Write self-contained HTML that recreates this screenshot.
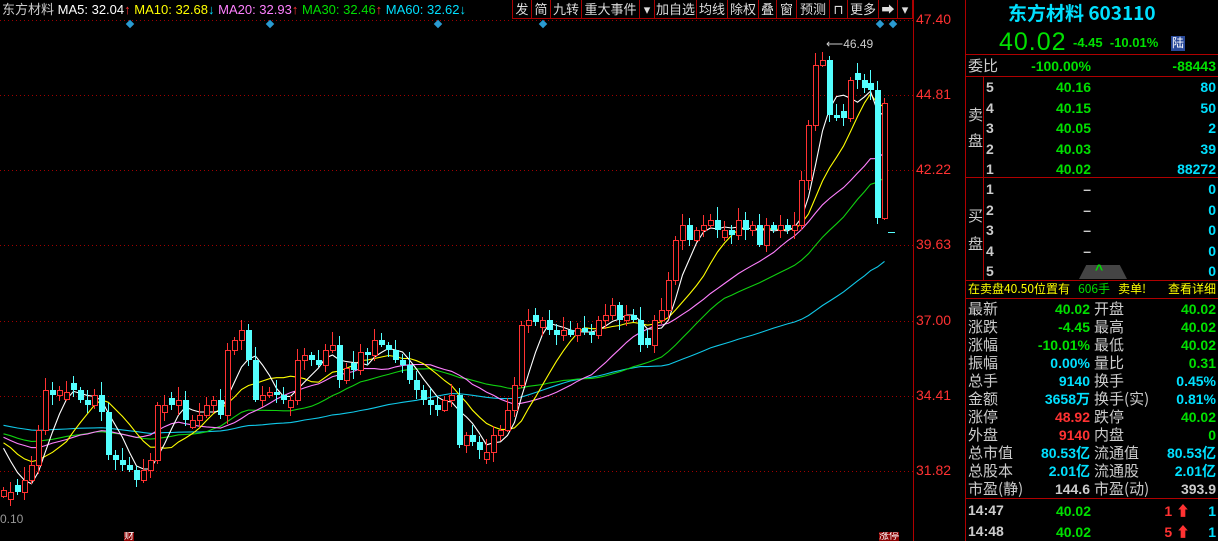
<!DOCTYPE html>
<html><head><meta charset="utf-8">
<style>
*{margin:0;padding:0;box-sizing:border-box}
body{width:1218px;height:541px;background:#000;overflow:hidden;position:relative;font-family:"Liberation Sans","Noto Sans CJK SC",sans-serif;}
.a{position:absolute;white-space:nowrap}
.tb{position:absolute;top:0;height:19px;border:1px solid #a00;border-top:none;color:#ddd;font-size:13px;line-height:18px;text-align:center;font-family:"Noto Sans CJK SC",sans-serif;background:#000}
.r{color:#ff3232}.g{color:#00e000}.c{color:#00e0ff}.w{color:#ccc}.y{color:#ffff00}
.lbl{position:absolute;left:968px;font-size:15px;color:#ccc;font-family:"Noto Sans CJK SC",sans-serif;line-height:18px}
.v{position:absolute;text-align:right;font-size:14px;font-weight:bold;line-height:18px}
.hl{position:absolute;left:965px;width:253px;height:1px;background:#b00000}
</style></head><body>
<svg id="ch" width="913" height="541" style="position:absolute;left:0;top:0">
</svg>
<div class="a" style="left:913px;top:0;width:1px;height:541px;background:#b00000"></div>
<div class="a" style="left:965px;top:0;width:1px;height:541px;background:#b00000"></div>
<div class="a" style="left:2px;top:1px;font-size:13px;line-height:16px">
<span class="w" style="font-family:'Noto Sans CJK SC',sans-serif">东方材料</span>
<span style="color:#fff">MA5: 32.04</span><span class="r">↑</span>
<span class="y">MA10: 32.68</span><span class="c">↓</span>
<span style="color:#ff80ff">MA20: 32.93</span><span class="r">↑</span>
<span class="g">MA30: 32.46</span><span class="r">↑</span>
<span class="c">MA60: 32.62</span><span class="c">↓</span>
</div>
<div class="tb" style="left:512px;width:20px">发</div>
<div class="tb" style="left:531px;width:20px">简</div>
<div class="tb" style="left:550px;width:32px">九转</div>
<div class="tb" style="left:581px;width:59px">重大事件</div>
<div class="tb" style="left:639px;width:16px">▾</div>
<div class="tb" style="left:654px;width:43px">加自选</div>
<div class="tb" style="left:696px;width:32px">均线</div>
<div class="tb" style="left:727px;width:32px">除权</div>
<div class="tb" style="left:758px;width:19px">叠</div>
<div class="tb" style="left:776px;width:21px">窗</div>
<div class="tb" style="left:796px;width:34px">预测</div>
<div class="tb" style="left:829px;width:19px">⊓</div>
<div class="tb" style="left:847px;width:32px">更多</div>
<div class="tb" style="left:878px;width:20px">➡</div>
<div class="tb" style="left:897px;width:16px">▾</div>
<div class="a r" style="left:916px;top:11px;font-size:14px">47.40</div>
<div class="a r" style="left:916px;top:86px;font-size:14px">44.81</div>
<div class="a r" style="left:916px;top:161px;font-size:14px">42.22</div>
<div class="a r" style="left:916px;top:236px;font-size:14px">39.63</div>
<div class="a r" style="left:916px;top:312px;font-size:14px">37.00</div>
<div class="a r" style="left:916px;top:387px;font-size:14px">34.41</div>
<div class="a r" style="left:916px;top:462px;font-size:14px">31.82</div>
<div class="a" style="left:0;top:512px;font-size:12px;color:#999">0.10</div>
<div class="a" style="left:124px;top:532px;font-size:10px;color:#fff;background:#800;line-height:10px;height:9px;overflow:hidden">财</div>
<div class="a" style="left:879px;top:532px;font-size:10px;color:#fff;background:#800;line-height:10px;height:9px;overflow:hidden">涨停</div>
<div class="a" style="left:826px;top:37px;font-size:12px;color:#ccc">⟵46.49</div>
<div class="a c" style="left:1008px;top:1px;font-size:19px;font-weight:bold;font-family:'Noto Sans CJK SC',sans-serif;line-height:24px">东方材料 603110</div>
<div class="a g" style="left:999px;top:28px;font-size:25px;line-height:28px;letter-spacing:1px">40.02</div>
<div class="a g" style="left:1073px;top:35px;font-size:13px;font-weight:bold">-4.45&nbsp;&nbsp;-10.01%</div>
<div class="a" style="left:1171px;top:36px;width:14px;height:15px;background:#2a4a9a;color:#fff;font-size:12px;text-align:center;line-height:15px">陆</div>
<div class="hl" style="top:54px"></div>
<div class="hl" style="top:76px"></div>
<div class="hl" style="top:177px"></div>
<div class="hl" style="top:280px"></div>
<div class="hl" style="top:298px"></div>
<div class="hl" style="top:498px"></div>
<div class="a" style="left:983px;top:76px;width:1px;height:204px;background:#b00000"></div>
<div class="lbl" style="top:57px">委比</div>
<div class="v g" style="left:1000px;width:91px;top:57px">-100.00%</div>
<div class="v g" style="left:1120px;width:96px;top:57px">-88443</div>
<div class="lbl" style="top:102px;width:14px;white-space:normal;line-height:26px">卖盘</div>
<div class="lbl" style="top:202px;width:14px;white-space:normal;line-height:28px">买盘</div>
<div id="ob"></div>
<div class="a" style="left:1079px;top:265px;width:48px;height:14px;background:#444;clip-path:polygon(15% 0,85% 0,100% 100%,0 100%)"></div>
<div class="a g" style="left:1095px;top:261px;font-size:14px;font-weight:bold">^</div>
<div class="a" style="left:968px;top:281px;font-size:12px;line-height:16px;font-family:'Noto Sans CJK SC',sans-serif"><span class="y">在卖盘40.50位置有</span>&nbsp;&nbsp;&nbsp;<span class="g">606手</span>&nbsp;&nbsp;&nbsp;<span class="y">卖单!</span></div>
<div class="a y" style="left:1168px;top:281px;font-size:12px;line-height:16px;font-family:'Noto Sans CJK SC',sans-serif">查看详细</div>
<div id="st"></div>
<div class="a w" style="left:968px;top:502px;font-size:14px;font-weight:bold">14:47</div>
<div class="v g" style="left:1000px;width:91px;top:502px">40.02</div>
<div class="v r" style="left:1100px;width:90px;top:502px">1 ⬆</div>
<div class="v c" style="left:1150px;width:66px;top:502px">1</div>
<div class="a w" style="left:968px;top:523px;font-size:14px;font-weight:bold">14:48</div>
<div class="v g" style="left:1000px;width:91px;top:523px">40.02</div>
<div class="v r" style="left:1100px;width:90px;top:523px">5 ⬆</div>
<div class="v c" style="left:1150px;width:66px;top:523px">1</div>
<script>
(function(){
var ob='';
var sell=[['5','40.16','80'],['4','40.15','50'],['3','40.05','2'],['2','40.03','39'],['1','40.02','88272']];
sell.forEach(function(r,i){var t=78+i*20.5;
ob+='<div class="v w" style="left:986px;width:10px;top:'+t+'px;text-align:left">'+r[0]+'</div><div class="v g" style="left:1000px;width:91px;top:'+t+'px">'+r[1]+'</div><div class="v c" style="left:1120px;width:96px;top:'+t+'px">'+r[2]+'</div>';});
for(var i=0;i<5;i++){var t=180+i*20.5;
ob+='<div class="v w" style="left:986px;width:10px;top:'+t+'px;text-align:left">'+(i+1)+'</div><div class="v w" style="left:1000px;width:91px;top:'+t+'px">–</div><div class="v c" style="left:1120px;width:96px;top:'+t+'px">0</div>';}
document.getElementById('ob').innerHTML=ob;
var st=[['最新','40.02','g','开盘','40.02','g'],['涨跌','-4.45','g','最高','40.02','g'],['涨幅','-10.01%','g','最低','40.02','g'],['振幅','0.00%','c','量比','0.31','g'],['总手','9140','c','换手','0.45%','c'],['金额','3658万','c','换手(实)','0.81%','c'],['涨停','48.92','r','跌停','40.02','g'],['外盘','9140','r','内盘','0','g'],['总市值','80.53亿','c','流通值','80.53亿','c'],['总股本','2.01亿','c','流通股','2.01亿','c'],['市盈(静)','144.6','w','市盈(动)','393.9','w']];
var h='';st.forEach(function(r,i){var t=300+i*18;
h+='<div class="lbl" style="top:'+t+'px">'+r[0]+'</div><div class="v '+r[2]+'" style="left:1000px;width:90px;top:'+t+'px">'+r[1]+'</div><div class="lbl" style="left:1094px;top:'+t+'px">'+r[3]+'</div><div class="v '+r[5]+'" style="left:1120px;width:96px;top:'+t+'px">'+r[4]+'</div>';});
document.getElementById('st').innerHTML=h;

var s='';
[20,95,170,245,321,396,471].forEach(function(y){s+='<line x1="0" y1="'+(y+0.5)+'" x2="913" y2="'+(y+0.5)+'" stroke="#a00000" stroke-dasharray="1,3"/>';});
[130,270,438,543,880,893].forEach(function(x){s+='<rect x="'+(x-3)+'" y="21" width="6" height="6" fill="#2a9ad0" transform="rotate(45 '+x+' 24)"/>';});
var P=[[3,490],[10,492],[17,492],[24,480],[31,465],[38,430],[45,390],[52,395],[59,390],[66,392],[73,390],[80,400],[87,405],[94,395],[101,412],[108,455],[115,460],[122,465],[129,470],[136,480],[143,470],[150,460],[157,405],[164,405],[171,405],[178,400],[185,420],[192,420],[199,415],[206,405],[213,400],[220,415],[227,350],[234,340],[241,330],[248,360],[255,400],[262,395],[269,392],[276,395],[283,400],[290,400],[297,360],[304,355],[311,360],[318,365],[325,350],[332,345],[339,380],[346,368],[353,370],[360,352],[367,355],[374,340],[381,345],[388,350],[395,360],[402,365],[409,380],[416,390],[423,400],[430,405],[437,410],[444,400],[451,395],[459,445],[466,435],[472,442],[479,450],[486,452],[493,435],[500,430],[507,410],[514,385],[521,325],[528,320],[535,322],[542,320],[549,330],[556,335],[563,330],[570,335],[577,328],[584,332],[591,335],[598,320],[605,315],[612,305],[619,320],[626,315],[633,320],[640,345],[647,345],[654,320],[661,310],[668,280],[675,240],[682,225],[689,240],[696,230],[703,225],[710,220],[717,230],[724,230],[731,235],[738,220],[745,230],[752,225],[759,245],[766,225],[773,230],[780,225],[787,230],[794,225],[801,180],[808,125],[815,65],[822,60],[829,115],[836,118],[843,118],[850,80],[857,80],[864,88],[870,90],[877,218],[884,103]];
var n=P.length;
var pre=[];for(var i=0;i<60;i++)pre.push(400+i*0.5+(i%4)*6);
var all=pre.concat(P.map(function(p){return p[1];}));
function ma(k,col){var p='';for(var i=0;i<n;i++){var j=i+60;var sum=0;for(var q=0;q<k;q++)sum+=all[j-q];var y=sum/k;var x=P[i][0]+0.5;p+=(i?'L':'M')+x.toFixed(1)+' '+y.toFixed(1);}s+='<path d="'+p+'" fill="none" stroke="'+col+'" stroke-width="1.1"/>';}
ma(60,'#10c8e8');ma(30,'#10d010');ma(20,'#ff80ff');ma(10,'#ffff00');ma(5,'#ffffff');
for(var i=0;i<n;i++){var c=P[i][1],o=i?P[i-1][1]:c+6;var x=P[i][0];
if(Math.abs(o-c)<3){o=c+(i%2?7:-7);}
var hi=Math.min(o,c)-3-((i*7)%11),lo=Math.max(o,c)+2+((i*5)%9);
var up=c<o;var col=up?'#ff3232':'#54ffff';
s+='<line x1="'+(x+0.5)+'" y1="'+hi+'" x2="'+(x+0.5)+'" y2="'+lo+'" stroke="'+col+'"/>';
var t=Math.min(o,c),bh=Math.max(1,Math.abs(o-c));
if(up)s+='<rect x="'+(x-2)+'.5" y="'+t+'.5" width="5" height="'+bh+'" fill="#000" stroke="'+col+'"/>';
else s+='<rect x="'+(x-2)+'" y="'+t+'" width="6" height="'+bh+'" fill="'+col+'"/>';}
s+='<line x1="888" y1="232.5" x2="895" y2="232.5" stroke="#54ffff"/>';
document.getElementById('ch').innerHTML=s;
})();
</script>
</body></html>
